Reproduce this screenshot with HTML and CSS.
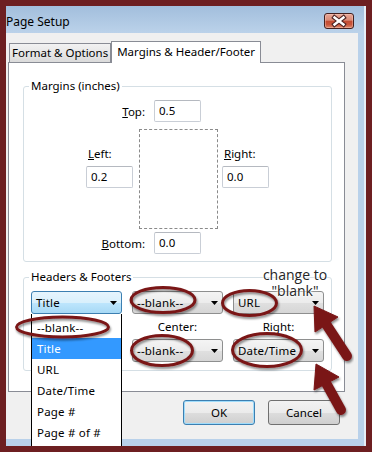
FILE: index.html
```html
<!DOCTYPE html>
<html lang="en">
<head>
  <meta charset="UTF-8">
  <title>Page Setup</title>
  <link rel="stylesheet" href="styles.css">
</head>
<body>

  <div class="window">
    <div class="titlebar">
      <div class="title">Page Setup</div>
      <div class="close">
        <svg width="30" height="16" viewBox="-15 -8 30 16">
          <path d="M-4.5 -3.5 L4.5 3.5 M-4.5 3.5 L4.5 -3.5" stroke="#4a2222" stroke-width="4.6" stroke-linecap="square"/>
          <path d="M-4.5 -3.5 L4.5 3.5 M-4.5 3.5 L4.5 -3.5" stroke="#fff" stroke-width="2.4" stroke-linecap="square"/>
        </svg>
      </div>
    </div>

    <div class="body">
      <!-- tabs -->
      <div class="tabs">
        <div class="tab">Format &amp; Options</div>
        <div class="tab active">Margins &amp; Header/Footer</div>
      </div>

      <div class="panel">
        <fieldset class="group margins">
          <legend>Margins (inches)</legend>
          <div class="mrow top-row">
            <span class="lbl"><u>T</u>op:</span>
            <div class="field">0.5</div>
          </div>
          <div class="mmid">
            <div class="side">
              <div class="side-lbl"><u>L</u>eft:</div>
              <div class="field">0.2</div>
            </div>
            <div class="page-rect"></div>
            <div class="side">
              <div class="side-lbl"><u>R</u>ight:</div>
              <div class="field">0.0</div>
            </div>
          </div>
          <div class="mrow bottom-row">
            <span class="lbl"><u>B</u>ottom:</span>
            <div class="field">0.0</div>
          </div>
        </fieldset>

        <fieldset class="group hf">
          <legend>Headers &amp; Footers</legend>
          <div class="hf-grid">
            <div class="select focus"><span>Title</span><svg class="arrow" width="7" height="4"><polygon points="0,0 7,0 3.5,4"/></svg></div>
            <div class="select"><span>--blank--</span><svg class="arrow" width="7" height="4"><polygon points="0,0 7,0 3.5,4"/></svg></div>
            <div class="select"><span>URL</span><svg class="arrow" width="7" height="4"><polygon points="0,0 7,0 3.5,4"/></svg></div>

            <!-- left label and select sit under the open list -->
            <div class="hf-lbl"></div>
            <div class="hf-lbl">Center:</div>
            <div class="hf-lbl">Right:</div>

            <div class="select"><span></span><svg class="arrow" width="7" height="4"><polygon points="0,0 7,0 3.5,4"/></svg></div>
            <div class="select"><span>--blank--</span><svg class="arrow" width="7" height="4"><polygon points="0,0 7,0 3.5,4"/></svg></div>
            <div class="select"><span>Date/Time</span><svg class="arrow" width="7" height="4"><polygon points="0,0 7,0 3.5,4"/></svg></div>
          </div>
        </fieldset>
      </div>

      <div class="actions">
        <button class="btn default">OK</button>
        <button class="btn">Cancel</button>
      </div>
    </div>

    <!-- open dropdown of the left header select -->
    <ul class="droplist">
      <li>--blank--</li>
      <li class="sel">Title</li>
      <li>URL</li>
      <li>Date/Time</li>
      <li>Page #</li>
      <li>Page # of #</li>
    </ul>
  </div>

  <!-- annotations drawn over the screenshot -->
  <div class="note">change to<br>"blank"</div>
  <svg class="marks" width="372" height="452" viewBox="0 0 372 452">
    <defs>
      <filter id="shadow" x="-20%" y="-20%" width="140%" height="160%">
        <feDropShadow dx="1" dy="2" stdDeviation="1.2" flood-color="#000" flood-opacity="0.45"/>
      </filter>
    </defs>
    <g fill="none" stroke="#7a1719" stroke-width="3" filter="url(#shadow)">
      <ellipse cx="62.5" cy="327" rx="46" ry="10"/>
      <ellipse cx="163" cy="300" rx="32" ry="12.5"/>
      <ellipse cx="249.5" cy="303" rx="27" ry="12.5"/>
      <ellipse cx="162" cy="350.5" rx="30.5" ry="15"/>
      <ellipse cx="267" cy="350" rx="34.5" ry="16.5"/>
    </g>
    <g fill="#7a1719" stroke="#7a1719" filter="url(#shadow)">
      <line x1="326" y1="324" x2="347" y2="356" stroke-width="10" stroke-linecap="round"/>
      <polygon points="314,306 338,317 315,332" stroke-width="1" stroke-linejoin="round"/>
      <line x1="326" y1="383" x2="341" y2="410" stroke-width="10" stroke-linecap="round"/>
      <polygon points="316,364 339,377 314,390" stroke-width="1" stroke-linejoin="round"/>
    </g>
  </svg>

</body>
</html>
```

FILE: styles.css
```css
html, body {
  margin: 0;
  padding: 0;
}

body {
  width: 372px;
  height: 452px;
  overflow: hidden;
  position: relative;
  background: #6d1f21;
  font-family: "Noto Sans", "Open Sans", sans-serif;
  font-size: 11.5px;
  color: #000;
}

.window {
  position: relative;
  margin: 6px 0 0 6px;
  width: 360px;
  height: 440px;
  box-sizing: border-box;
  border-right: 2px solid #e6eef7;
  background: #b9d1ea;
  display: flex;
  flex-direction: column;
  overflow: hidden;
}

/* title bar */
.titlebar {
  height: 27px;
  flex: none;
  display: flex;
  align-items: flex-start;
  justify-content: space-between;
  padding-right: 10px;
  background: linear-gradient(#a2bedc, #bbd2ea);
}

.title {
  padding-top: 8px;
  font-size: 12px;
  line-height: 15px;
}

.close {
  margin-top: 7px;
  width: 30px;
  height: 16px;
  box-sizing: border-box;
  border: 1px solid #44201f;
  border-radius: 3px;
  background: linear-gradient(#e9a797 0%, #d98a76 45%, #c24a31 50%, #c9563c 75%, #dc8a70 100%);
  box-shadow: inset 0 0 0 1px rgba(255, 220, 210, 0.35);
  display: flex;
  align-items: center;
  justify-content: center;
}

.close svg {
  display: block;
  margin: -1px;
}

/* dialog body */
.body {
  flex: 1;
  margin: 0 6px 7px 0;
  background: #f0f0f0;
  display: flex;
  flex-direction: column;
}

.tabs {
  display: flex;
  align-items: flex-end;
  padding: 8px 0 0 3px;
}

.tab {
  height: 19px;
  box-sizing: border-box;
  padding: 0 2px;
  border: 1px solid #898c95;
  border-bottom: none;
  line-height: 18px;
  background: linear-gradient(#f2f2f2, #dbdbdb);
  white-space: nowrap;
}

.tab.active {
  position: relative;
  z-index: 1;
  height: 22px;
  margin-bottom: -1px;
  padding: 0 5px;
  line-height: 20px;
  background: #fff;
}

.panel {
  margin-left: 2px;
  width: 337px;
  height: 330px;
  box-sizing: border-box;
  border: 1px solid #898c95;
  background: #fff;
  padding: 15px 0 0 14px;
}

.group {
  margin: 0;
  padding: 0;
  width: 309px;
  box-sizing: border-box;
  border: 1px solid #d5dfe5;
  border-radius: 3px;
}

.group legend {
  margin-left: 5px;
  padding: 0 2px;
  line-height: 16px;
}

/* margins */
.mrow {
  display: grid;
  grid-template-columns: 130px 47px;
  align-items: center;
}

.mrow .lbl {
  text-align: right;
  padding-right: 9px;
}

.top-row {
  margin-top: 6px;
}

.bottom-row {
  margin-top: 3px;
  margin-bottom: 7px;
}

.field {
  width: 47px;
  height: 22px;
  box-sizing: border-box;
  border: 1px solid #c9ced6;
  border-top-color: #b5b9c0;
  border-radius: 2px;
  padding-left: 4px;
  line-height: 20px;
  background: #fff;
}

.mmid {
  display: flex;
  margin-top: 7px;
  padding-left: 62px;
}

.side-lbl {
  margin-top: 17px;
  padding-left: 2px;
  line-height: 15px;
}

.side .field {
  margin-top: 5px;
}

.page-rect {
  width: 79px;
  height: 100px;
  margin: 0 4px 0 6px;
  box-sizing: border-box;
  border: 1px dashed #8a8a8a;
}

/* headers & footers */
.hf {
  margin-top: 7px;
}

.hf-grid {
  display: grid;
  grid-template-columns: 91px 91px 91px;
  grid-template-rows: 23px 25px 23px;
  column-gap: 10px;
  padding: 6px 0 8px 7px;
}

.hf-lbl {
  align-self: center;
  text-align: center;
  line-height: 15px;
}

.select {
  display: flex;
  align-items: center;
  justify-content: space-between;
  box-sizing: border-box;
  padding: 0 4px 0 4px;
  border: 1px solid #8e8f8f;
  border-radius: 3px;
  background: linear-gradient(#f4f4f4 0%, #ececec 50%, #e0e0e0 51%, #d6d6d6 100%);
  white-space: nowrap;
  letter-spacing: 0.2px;
}

.select.focus {
  border-color: #3c7fb1;
  background: linear-gradient(#e6f5fd 0%, #d9f0fc 50%, #bee6fd 51%, #a7d9f5 100%);
}

.arrow {
  display: block;
  flex: none;
}

/* buttons */
.actions {
  display: flex;
  justify-content: flex-end;
  gap: 13px;
  padding: 8px 18px 0 0;
}

.btn {
  width: 72px;
  height: 25px;
  margin: 0;
  padding: 0;
  border: 1px solid #707070;
  border-radius: 3px;
  font-family: inherit;
  font-size: 11.5px;
  color: #000;
  background: linear-gradient(#f2f2f2 0%, #ebebeb 50%, #dddddd 51%, #cfcfcf 100%);
}

.btn.default {
  border-color: #3c7fb1;
  box-shadow: inset 0 0 0 1px #9fdcfb;
}

/* open dropdown list */
.droplist {
  position: absolute;
  left: 25px;
  top: 308px;
  bottom: 0;
  width: 91px;
  margin: 0;
  padding: 3px 0 0 0;
  box-sizing: border-box;
  list-style: none;
  background: #fff;
  border-left: 1px solid #000;
  border-right: 1px solid #000;
}

.droplist li {
  height: 21px;
  line-height: 21px;
  padding-left: 5px;
  white-space: nowrap;
  letter-spacing: 0.2px;
}

.droplist li.sel {
  background: #3399ff;
  color: #fff;
}

/* annotations */
.note {
  position: absolute;
  left: 260px;
  top: 267px;
  width: 70px;
  text-align: center;
  font-family: "Open Sans", sans-serif;
  font-size: 14px;
  line-height: 16px;
  color: #262626;
  text-shadow: 0 0 2px #fff, 0 0 2px #fff, 0 0 3px #fff;
}

.marks {
  position: absolute;
  left: 0;
  top: 0;
  pointer-events: none;
}
```
